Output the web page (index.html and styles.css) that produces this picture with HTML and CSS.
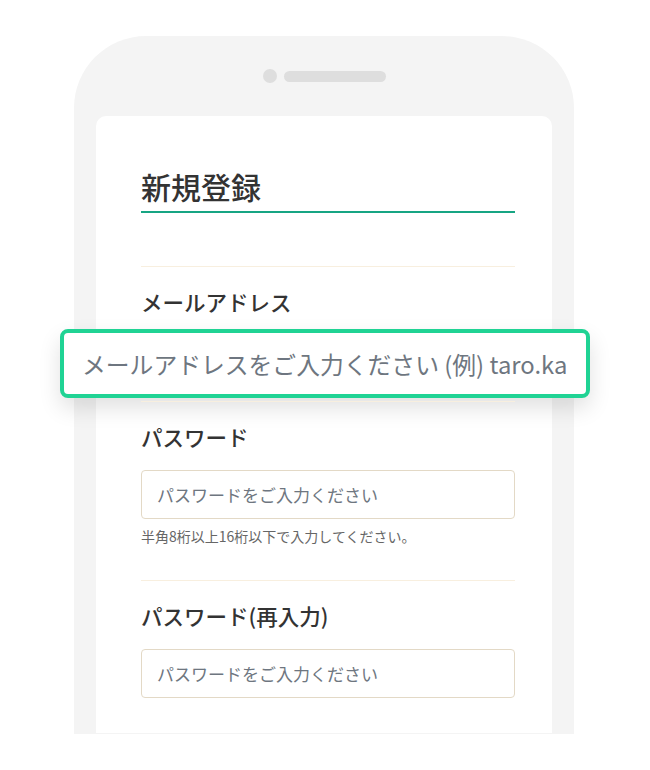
FILE: index.html
```html
<!DOCTYPE html>
<html lang="ja">
<head>
  <meta charset="UTF-8" />
  <title>新規登録</title>
  <link rel="stylesheet" href="styles.css">
</head>
<body>
  <div class="phone">
    <!-- カメラとスピーカー -->
    <div class="phone-top">
      <span class="camera"></span>
      <span class="speaker"></span>
    </div>

    <div class="screen">
      <h1 class="title">新規登録</h1>

      <div class="field field-email">
        <label for="email">メールアドレス</label>
        <input type="email" id="email" class="input" placeholder="メールアドレスをご入力ください" />
        <!-- 拡大表示した入力欄 -->
        <input type="email" class="input-zoom" placeholder="メールアドレスをご入力ください (例) taro.kanazawa@example.com" />
      </div>

      <div class="field">
        <label for="password">パスワード</label>
        <input type="password" id="password" class="input" placeholder="パスワードをご入力ください" />
        <p class="hint">半角8桁以上16桁以下で入力してください。</p>
      </div>

      <div class="field">
        <label for="password2">パスワード(再入力)</label>
        <input type="password" id="password2" class="input" placeholder="パスワードをご入力ください" />
      </div>
    </div>
  </div>
</body>
</html>
```

FILE: styles.css
```css
body {
  margin: 0;
  background: #fff;
  font-family: "Noto Sans CJK JP", "Noto Sans", sans-serif;
  color: #333;
}

.phone {
  width: 456px;
  height: 697px;
  margin: 36px 0 0 74px;
  padding: 0 22px 1px;
  background: #f4f4f4;
  border-radius: 72px 72px 0 0;
  display: flex;
  flex-direction: column;
}

.phone-top {
  height: 80px;
  display: flex;
  align-items: center;
  justify-content: center;
  gap: 7px;
  box-sizing: border-box;
}

.camera {
  width: 14px;
  height: 14px;
  border-radius: 50%;
  background: #dedede;
}

.speaker {
  width: 102px;
  height: 11px;
  border-radius: 6px;
  background: #dedede;
}

.screen {
  flex: 1;
  background: #fff;
  border-radius: 10px 10px 0 0;
  padding: 53px 37px 0 45px;
}

.title {
  margin: 0 0 53px;
  padding-bottom: 8px;
  font-size: 30px;
  line-height: 34px;
  font-weight: 500;
  color: #333;
  border-bottom: 2px solid #17a583;
}

.field {
  position: relative;
  border-top: 1px solid #f8efdf;
  padding: 20px 0 18px;
}

.field-email {
  padding-bottom: 17px;
}

.field label {
  display: block;
  font-size: 21.5px;
  line-height: 30px;
  font-weight: 500;
  margin-bottom: 18px;
}

.input {
  display: block;
  width: 100%;
  height: 49px;
  box-sizing: border-box;
  padding: 0 15px;
  border: 1px solid #e3d9c6;
  border-radius: 4px;
  font-family: inherit;
  font-size: 17px;
  color: #333;
  background: #fff;
}

.input::placeholder,
.input-zoom::placeholder {
  color: #6e7680;
}

.input-zoom {
  position: absolute;
  left: -81px;
  top: 62px;
  width: 530px;
  height: 69px;
  box-sizing: border-box;
  padding: 0 18px;
  border: 4px solid #20d394;
  border-radius: 8px;
  background: #fff;
  font-family: inherit;
  font-size: 23.8px;
  box-shadow: 0 10px 22px rgba(0, 0, 0, 0.12);
  outline: none;
}

.hint {
  margin: 7px 0 16px;
  font-size: 14px;
  line-height: 20px;
  color: #666;
}
```
